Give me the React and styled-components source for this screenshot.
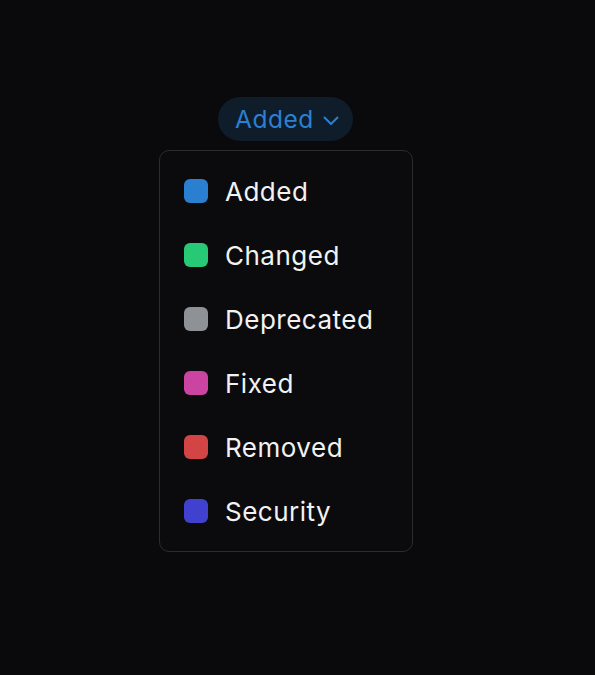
import React, { useState } from 'react';
import styled, { createGlobalStyle } from 'styled-components';

const GlobalStyle = createGlobalStyle`
  html, body {
    margin: 0;
    padding: 0;
    background: #0a0a0c;
  }
  body {
    font-family: Inter, "Noto Sans", sans-serif;
    -webkit-font-smoothing: antialiased;
  }
`;

const categories = [
  { label: 'Added', color: '#2a7fd1' },
  { label: 'Changed', color: '#28c976' },
  { label: 'Deprecated', color: '#8e9196' },
  { label: 'Fixed', color: '#cc44a1' },
  { label: 'Removed', color: '#d34444' },
  { label: 'Security', color: '#4141cf' },
];

const App = () => {
  const [selected, setSelected] = useState('Added');

  return (
    <>
      <GlobalStyle />
      <Page>
        <Dropdown>
          <Trigger>
            {selected}
            <svg width="18" height="18" viewBox="0 0 18 18" fill="none">
              <path d="M2.5 6.5l6.5 6.5 6.5-6.5" stroke="currentColor" strokeWidth="2" strokeLinecap="round" strokeLinejoin="round" />
            </svg>
          </Trigger>
          <Menu>
            {categories.map(c => (
              <Item key={c.label} onClick={() => setSelected(c.label)}>
                <Swatch $color={c.color} />
                {c.label}
              </Item>
            ))}
          </Menu>
        </Dropdown>
      </Page>
    </>
  );
};

export default App;

const Page = styled.div`
  width: 595px;
  height: 675px;
  display: flex;
  justify-content: center;
  padding: 97px 23px 0 0;
  box-sizing: border-box;
`;

const Dropdown = styled.div`
  display: flex;
  flex-direction: column;
  align-items: center;
  gap: 9px;
`;

const Trigger = styled.button`
  height: 44px;
  width: 135px;
  display: flex;
  align-items: center;
  gap: 8px;
  padding: 0 0 0 17px;
  border: none;
  border-radius: 22px;
  background: #0f1c2a;
  color: #2b80d3;
  font-family: Inter, "Noto Sans", sans-serif;
  font-size: 24.5px;
  letter-spacing: 0.5px;
  font-weight: 400;
  cursor: pointer;
  margin-left: -1px;
  svg {
    margin-top: 2px;
  }
`;

const Menu = styled.div`
  width: 254px;
  box-sizing: border-box;
  padding: 8px 0;
  border: 1px solid #2c2c2f;
  border-radius: 10px;
  background: #0b0b0d;
  display: flex;
  flex-direction: column;
`;

const Item = styled.div`
  height: 64px;
  display: flex;
  align-items: center;
  gap: 17px;
  padding-left: 24px;
  color: #f2f2f2;
  font-size: 26px;
  letter-spacing: 0.5px;
  cursor: pointer;
`;

const Swatch = styled.span`
  width: 24px;
  height: 24px;
  border-radius: 6px;
  background: ${p => p.$color};
  flex-shrink: 0;
`;
